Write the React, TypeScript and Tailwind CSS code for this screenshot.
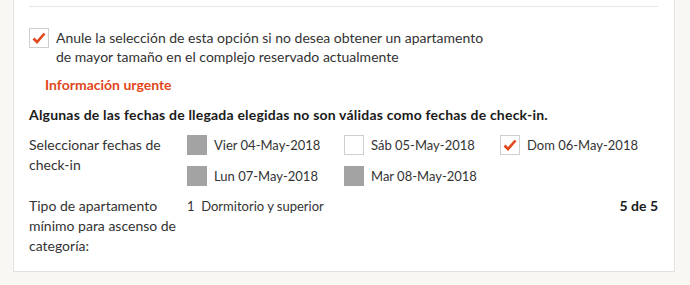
import { ReactNode } from "react"

function Check({ checked, disabled }: { checked?: boolean; disabled?: boolean }) {
    if (disabled) {
        return <span className="block w-[20px] h-[20px] bg-[#a3a3a3] shrink-0" />
    }
    return (
        <span className="flex items-center justify-center w-[20px] h-[20px] border border-[#cfcfcf] bg-white shrink-0">
            {checked && (
                <svg width="14" height="12" viewBox="0 0 14 12">
                    <path d="M1.5 6.5 L5 10 L12.5 1.5" fill="none" stroke="#e2461b" strokeWidth="2.6" />
                </svg>
            )}
        </span>
    )
}

function DateOption({ label, checked, disabled }: { label: string; checked?: boolean; disabled?: boolean }) {
    return (
        <div className="flex items-center gap-[7px] h-[20px]">
            <Check checked={checked} disabled={disabled} />
            <span className="text-[13px]">{label}</span>
        </div>
    )
}

function Row({ label, children }: { label: ReactNode; children: ReactNode }) {
    return (
        <div className="flex">
            <div className="w-[158px] shrink-0">{label}</div>
            <div className="flex-1">{children}</div>
        </div>
    )
}

export default function App() {
    return (
        <div
            className="h-[285px] bg-[#f8f7f4] text-[#333] text-[14px] leading-[20px] overflow-hidden"
            style={{ fontFamily: "Lato, 'Noto Sans', sans-serif" }}
        >
            <div className="ml-[13px] w-[662px] h-[272px] bg-white border border-t-0 border-[#e4e2df] pl-[15px] pr-[16px]">
                <div className="h-[6px]" />
                <div className="h-px bg-[#e6e6e6]" />

                {/* Upgrade checkbox */}
                <div className="flex gap-[7px] mt-[20px]">
                    <div className="pt-[1px]">
                        <Check checked />
                    </div>
                    <p className="leading-[19px] pt-[1px]">
                        Anule la selección de esta opción si no desea obtener un apartamento
                        <br />
                        de mayor tamaño en el complejo reservado actualmente
                    </p>
                </div>

                <p className="mt-[9px] ml-[16px] font-bold text-[#e2461b]">Información urgente</p>

                <p className="mt-[10px] font-bold text-[#1a1a1a] tracking-[0.2px]">
                    Algunas de las fechas de llegada elegidas no son válidas como fechas de check-in.
                </p>

                <div className="mt-[10px]">
                    <Row
                        label={
                            <>
                                Seleccionar fechas de
                                <br />
                                check-in
                            </>
                        }
                    >
                        <div className="grid grid-cols-[157px_156px_1fr] gap-y-[11px]">
                            <DateOption label="Vier 04-May-2018" disabled />
                            <DateOption label="Sáb 05-May-2018" />
                            <DateOption label="Dom 06-May-2018" checked />
                            <DateOption label="Lun 07-May-2018" disabled />
                            <DateOption label="Mar 08-May-2018" disabled />
                        </div>
                    </Row>
                </div>

                <div className="mt-[10px]">
                    <Row
                        label={
                            <>
                                Tipo de apartamento
                                <br />
                                mínimo para ascenso de
                                <br />
                                categoría:
                            </>
                        }
                    >
                        <div className="flex justify-between">
                            <span className="text-[13px]">1&nbsp; Dormitorio y superior</span>
                            <span className="font-bold text-[#1a1a1a]">5 de 5</span>
                        </div>
                    </Row>
                </div>
            </div>
        </div>
    )
}
